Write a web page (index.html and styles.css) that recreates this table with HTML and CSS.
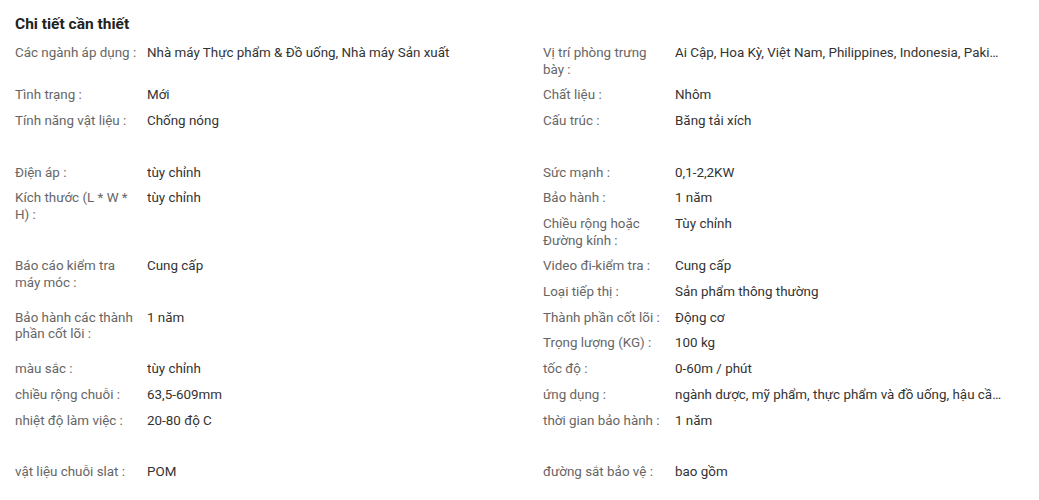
FILE: index.html
```html
<!DOCTYPE html>
<html lang="vi">
<head>
<meta charset="utf-8">
<title>Chi tiết cần thiết</title>
<link rel="stylesheet" href="styles.css">
</head>
<body>
<div class="page">
  <h3 class="title">Chi tiết cần thiết</h3>
  <div class="attrs">
    <div class="item"><span class="label">Các ngành áp dụng :</span><span class="value">Nhà máy Thực phẩm &amp; Đồ uống, Nhà máy Sản xuất</span></div>
    <div class="item"><span class="label">Vị trí phòng trưng bày :</span><span class="value">Ai Cập, Hoa Kỳ, Việt Nam, Philippines, Indonesia, Pakistan, Ấn Độ, Mexico, Nga</span></div>
    <div class="item"><span class="label">Tình trạng :</span><span class="value">Mới</span></div>
    <div class="item"><span class="label">Chất liệu :</span><span class="value">Nhôm</span></div>
    <div class="item"><span class="label">Tính năng vật liệu :</span><span class="value">Chống nóng</span></div>
    <div class="item"><span class="label">Cấu trúc :</span><span class="value">Băng tải xích</span></div>
    <div class="item is-empty"><span class="label"></span><span class="value"></span></div>
    <div class="item is-empty"><span class="label"></span><span class="value"></span></div>
    <div class="item"><span class="label">Điện áp :</span><span class="value">tùy chỉnh</span></div>
    <div class="item"><span class="label">Sức mạnh :</span><span class="value">0,1-2,2KW</span></div>
    <div class="item"><span class="label">Kích thước (L * W * H) :</span><span class="value">tùy chỉnh</span></div>
    <div class="item"><span class="label">Bảo hành :</span><span class="value">1 năm</span></div>
    <div class="item"><span class="label">Chiều rộng hoặc Đường kính :</span><span class="value">Tùy chỉnh</span></div>
    <div class="item"><span class="label">Báo cáo kiểm tra máy móc :</span><span class="value">Cung cấp</span></div>
    <div class="item"><span class="label">Video đi-kiểm tra :</span><span class="value">Cung cấp</span></div>
    <div class="item"><span class="label">Loại tiếp thị :</span><span class="value">Sản phẩm thông thường</span></div>
    <div class="item"><span class="label">Bảo hành các thành phần cốt lõi :</span><span class="value">1 năm</span></div>
    <div class="item"><span class="label">Thành phần cốt lõi :</span><span class="value">Động cơ</span></div>
    <div class="item"><span class="label">Trọng lượng (KG) :</span><span class="value">100 kg</span></div>
    <div class="item"><span class="label">màu sắc :</span><span class="value">tùy chỉnh</span></div>
    <div class="item"><span class="label">tốc độ :</span><span class="value">0-60m / phút</span></div>
    <div class="item"><span class="label">chiều rộng chuỗi :</span><span class="value">63,5-609mm</span></div>
    <div class="item"><span class="label">ứng dụng :</span><span class="value">ngành dược, mỹ phẩm, thực phẩm và đồ uống, hậu cần, điện tử</span></div>
    <div class="item"><span class="label">nhiệt độ làm việc :</span><span class="value">20-80 độ C</span></div>
    <div class="item"><span class="label">thời gian bảo hành :</span><span class="value">1 năm</span></div>
    <div class="item is-empty"><span class="label"></span><span class="value"></span></div>
    <div class="item is-empty"><span class="label"></span><span class="value"></span></div>
    <div class="item"><span class="label">vật liệu chuỗi slat :</span><span class="value">POM</span></div>
    <div class="item"><span class="label">đường sắt bảo vệ :</span><span class="value">bao gồm</span></div>
  </div>
</div>
</body>
</html>
```

FILE: styles.css
```css
html, body {
  margin: 0;
  padding: 0;
  background: #ffffff;
}

body {
  font-family: Roboto, "Noto Sans", Arial, sans-serif;
  color: #333333;
  overflow: hidden;
}

.page {
  padding: 13px 0 0 15px;
  overflow: hidden;
}

.title {
  margin: 0 0 10px 0;
  font-size: 15.5px;
  line-height: 22px;
  font-weight: 700;
  color: #222222;
}

.attrs {
  width: 1056px;
}

.attrs::after {
  content: "";
  display: block;
  clear: both;
}

.item {
  float: left;
  width: 528px;
  display: flex;
  align-items: flex-start;
  padding-bottom: 9px;
  font-size: 13.4px;
  line-height: 16.7px;
}

.item.is-empty {
  min-height: 16.7px;
}

.label {
  flex: none;
  width: 122px;
  padding-right: 10px;
  color: #666666;
}

.value {
  flex: none;
  width: 328px;
  color: #333333;
  white-space: nowrap;
  overflow: hidden;
  text-overflow: ellipsis;
}
```
